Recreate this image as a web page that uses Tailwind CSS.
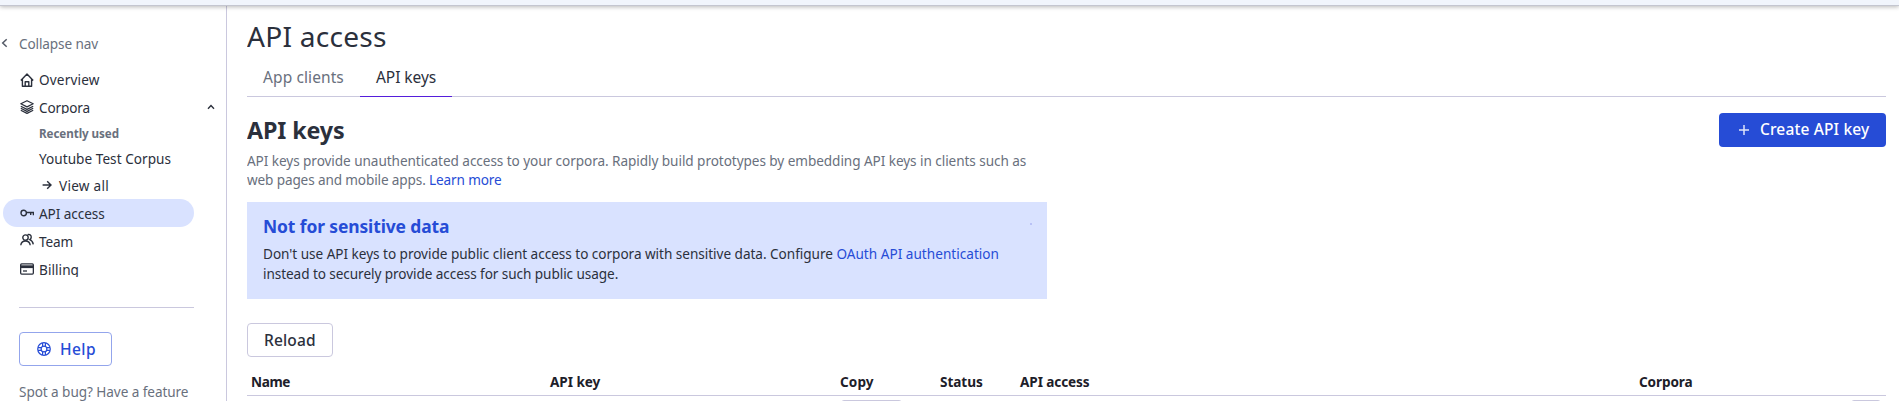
<!DOCTYPE html>
<html lang="en">
<head>
<meta charset="utf-8">
<title>API access</title>
<script src="https://cdn.jsdelivr.net/npm/@tailwindcss/browser@4"></script>
</head>
<body class="bg-white font-['Noto_Sans',sans-serif] text-[#2b303c] w-[1899px] h-[401px] overflow-hidden whitespace-nowrap flex flex-col">
<header class="h-[6px] shrink-0 relative z-10 bg-[#f1f5fc] border-b border-[#c4c6d0] shadow-[0_1px_4px_rgba(0,0,0,0.28)]"></header>
<div class="flex flex-1 min-h-0">
  <aside class="w-[227px] shrink-0 border-r border-[#cac8de] text-[13.58px] overflow-hidden">
    <div class="flex items-center h-[20px] mt-[28px] text-[#69707d]">
      <svg class="w-[10px] h-[12px] mr-[9px] -mt-[2px]" viewBox="0 0 10 12" fill="none" stroke="#535966" stroke-width="1.5"><path d="M6.7 2.2 2.7 6l4 3.8"/></svg>
      <span class="leading-[20px] tracking-[-0.11px]">Collapse nav</span>
    </div>
    <nav class="mt-[12px]">
      <a class="flex items-center h-[28px] ml-[3px] pl-[17px]">
        <svg class="w-[14px] h-[14px] mr-[5px] -mt-[1px]" viewBox="0 0 14 14" fill="none" stroke="currentColor" stroke-width="1.4" stroke-linejoin="round"><path d="M.8 7.400 7 1l6.200 6.400M2.400 6v7.200h9.200V6M5.200 13V8.800h3.600V13"/></svg>
        <span class="leading-[20px] tracking-[0.18px]">Overview</span>
      </a>
      <a class="flex items-center h-[28px] ml-[3px] pl-[17px]">
        <svg class="w-[14px] h-[14px] mr-[5px] -mt-[2px]" viewBox="0 0 14 14" fill="none" stroke="currentColor" stroke-width="1.2" stroke-linejoin="round"><path d="M7 .7 13.200 3.800 7 6.900.8 3.800zM.8 6.200 7 9.400l6.200-3.200M.8 8.200 7 11.400l6.200-3.200M.8 10.200 7 13.400l6.200-3.200"/></svg>
        <span class="leading-[12px] h-[12px] overflow-hidden tracking-[-0.13px]">Corpora</span>
        <svg class="w-[10px] h-[8px] ml-auto mr-[10px] -mt-[3px]" viewBox="0 0 10 8" fill="none" stroke="currentColor" stroke-width="1.4"><path d="M2 5.8 5 2.6l3 3.2"/></svg>
      </a>
      <div class="h-[23px] pl-[39px] leading-[23px] text-[11.64px] font-bold text-[#69707d] tracking-[-0.07px]">Recently used</div>
      <a class="block h-[27px] pl-[39px] leading-[27px] tracking-[0.04px]">Youtube Test Corpus</a>
      <a class="flex items-center h-[27px] pl-[42px]">
        <svg class="w-[10px] h-[10px] mr-[7px] -mt-[2px]" viewBox="0 0 10 10" fill="none" stroke="currentColor" stroke-width="1.4"><path d="M.6 5H9M5.2 1.2 9 5 5.2 8.8"/></svg>
        <span class="leading-[20px] tracking-[0.27px]">View all</span>
      </a>
      <a class="flex items-center h-[28px] ml-[3px] mr-[32px] pl-[17px] rounded-full bg-[#d9e2ff]">
        <svg class="w-[14px] h-[14px] mr-[5px]" viewBox="0 0 14 14" fill="none" stroke="currentColor" stroke-width="1.4"><circle cx="3.7" cy="7" r="2.7"/><path d="M6.200 6.500h7.200V9.200M10.700 6.500V9"/></svg>
        <span class="leading-[20px] mt-[2px] tracking-[-0.06px]">API access</span>
      </a>
      <a class="flex items-center h-[28px] ml-[3px] pl-[17px]">
        <svg class="w-[14px] h-[14px] mr-[5px] -mt-[2px]" viewBox="0 0 14 14" fill="none" stroke="currentColor" stroke-width="1.4"><circle cx="5.500" cy="4.600" r="2.700"/><path d="M.8 12.300c.3-2.800 2-4.300 4.700-4.300s4.400 1.500 4.700 4.300M7.600 1.700c2.400-.8 3.800.900 3.600 2.700-.1 1-.6 1.800-1.400 2.300 1.800.7 3.100 2.600 3.500 4.600"/></svg>
        <span class="leading-[20px] mt-[2px] tracking-[-0.14px]">Team</span>
      </a>
      <a class="flex items-center h-[28px] ml-[3px] pl-[17px]">
        <svg class="w-[14px] h-[12px] mr-[5px]" viewBox="0 0 14 12" fill="none" stroke="currentColor" stroke-width="1.300"><rect x=".65" y=".9" width="12.700" height="10.200" rx="1"/><path d="M1 3.700h12" stroke-width="2.800"/><path d="M3 8h4"/></svg>
        <span class="leading-[14px] h-[14px] mt-[2px] overflow-hidden tracking-[0.06px]">Billing</span>
      </a>
    </nav>
    <hr class="mt-[24px] ml-[19px] mr-[32px] border-[#cac8de]">
    <button class="mt-[24px] ml-[19px] w-[93px] h-[34px] flex items-center border border-[#93a5ec] rounded-[4px] pl-[17px] text-[#264cd6]">
      <svg class="w-[14px] h-[14px] mr-[9px] -mt-[1px]" viewBox="0 0 14 14" fill="none" stroke="currentColor" stroke-width="1.200"><circle cx="7" cy="7" r="6.300"/><circle cx="7" cy="7" r="2.900"/><path d="M5.600 1v3.400M8.400 1v3.400M5.600 9.600V13M8.400 9.600V13M1 5.600h3.400M1 8.400h3.400M9.600 5.600H13M9.600 8.400H13"/></svg>
      <span class="text-[15.5px] leading-[22px] font-medium tracking-[0.42px]">Help</span>
    </button>
    <p class="mt-[16px] ml-[19px] leading-[20px] text-[#69707d] tracking-[-0.07px]">Spot a bug? Have a feature</p>
  </aside>
  <main class="w-[1639px] ml-[20px] overflow-hidden">
    <h1 class="mt-[10px] h-[40px] leading-[40px] text-[28.1px] tracking-[0.25px]">API access</h1>
    <div class="h-[41px] flex border-b border-[#cac8de] text-[15.5px] leading-[42px]">
      <a class="w-[113px] pl-[16px] text-[#69707d] tracking-[0.1px]">App clients</a>
      <a class="w-[92px] h-[41px] pl-[16px] border-b border-[#551edb] tracking-[-0.06px]">API keys</a>
    </div>
    <div class="flex justify-between mt-[16px]">
      <div>
        <h2 class="h-[34px] leading-[34px] text-[23.3px] font-bold tracking-[-0.12px]">API keys</h2>
        <p class="mt-[4px] text-[13.58px] leading-[19px] text-[#69707d] tracking-[-0.06px]">API keys provide unauthenticated access to your corpora. Rapidly build prototypes by embedding API keys in clients such as<br><span class="tracking-[-0.13px]">web pages and mobile apps. </span><a class="text-[#264cd6] tracking-[-0.14px]">Learn more</a></p>
      </div>
      <button class="w-[167px] h-[34px] flex items-center rounded-[4px] bg-[#264cd6] text-white pl-[20px]">
        <svg class="w-[10px] h-[10px] mr-[11px]" viewBox="0 0 10 10" stroke="#dfe5fa" stroke-width="1.500"><path d="M5 0v10M0 5h10"/></svg>
        <span class="text-[15.5px] leading-[22px] font-medium tracking-[0.14px] -mt-[2px]">Create API key</span>
      </button>
    </div>
    <section class="mt-[13px] w-[800px] h-[97px] bg-[#d9e2ff] pl-[16px] pr-[15px] pt-[11px]">
      <div class="flex justify-between">
        <h3 class="h-[26px] leading-[26px] text-[17.46px] font-bold text-[#264cd6] tracking-[-0.11px]">Not for sensitive data</h3>
        <span class="w-[2px] h-[2px] mt-[10px] bg-[#b9c2f6]"></span>
      </div>
      <p class="mt-[5px] text-[13.58px] leading-[20px] tracking-[-0.03px]">Don't use API keys to provide public client access to corpora with sensitive data. Configure <a class="text-[#264cd6] tracking-[0.02px]">OAuth API authentication</a><br><span class="tracking-[-0.07px]">instead to securely provide access for such public usage.</span></p>
    </section>
    <button class="mt-[24px] w-[86px] h-[34px] block text-left border border-[#cac8de] rounded-[4px] pl-[16px] text-[15.5px] leading-[30px] font-medium tracking-[0.15px]">Reload</button>
    <div class="h-[39px] border-b border-[#cac8de] grid grid-cols-[299px_290px_100px_80px_619px_1fr] pl-[4px] pt-[15px] text-[13.58px] leading-[20px] font-bold text-[#1d2029]">
      <span class="tracking-[-0.38px]">Name</span><span class="tracking-[-0.05px]">API key</span><span class="tracking-[0.1px]">Copy</span><span class="tracking-[-0.06px]">Status</span><span class="tracking-[-0.1px]">API access</span><span class="tracking-[-0.1px]">Corpora</span>
    </div>
    <div class="flex justify-between mt-[4px] pl-[594px] pr-[5px]">
      <span class="w-[61px] h-[30px] border border-[#cac8de] rounded-[3px]"></span>
      <span class="w-[30px] h-[30px] border border-[#cac8de] rounded-[3px]"></span>
    </div>
  </main>
</div>
</body>
</html>
